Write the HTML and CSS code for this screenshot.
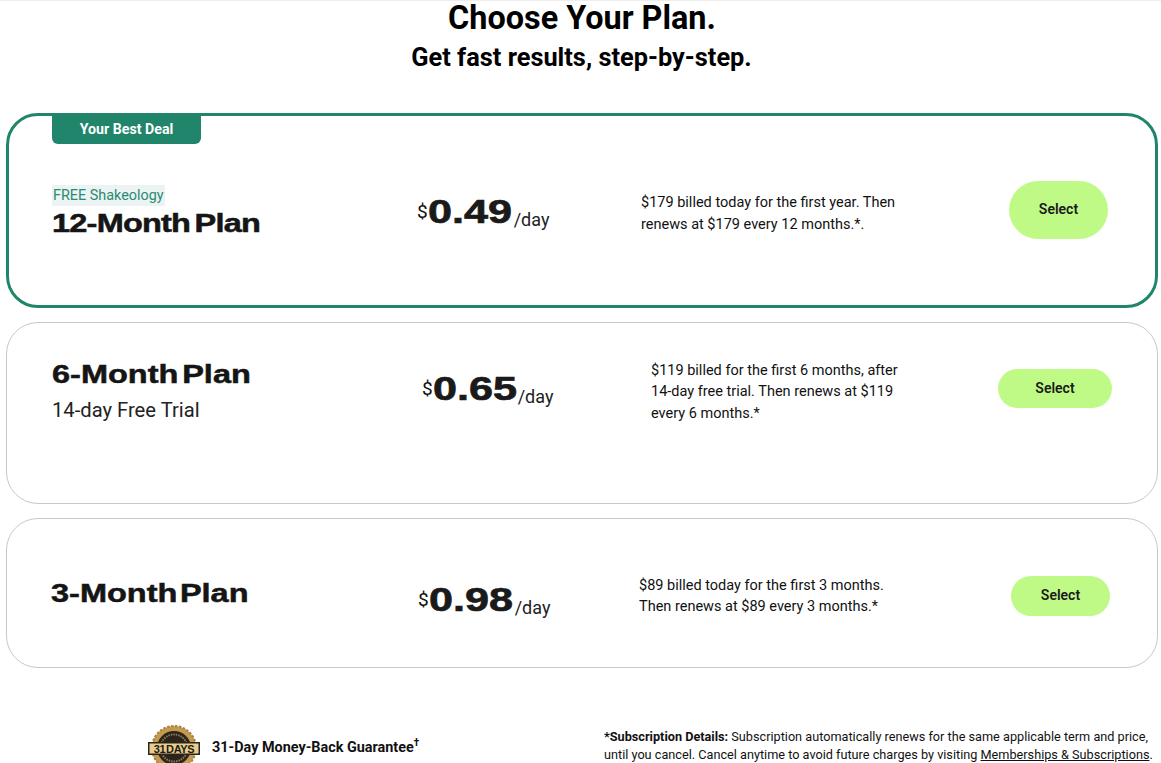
FILE: index.html
```html
<!DOCTYPE html>
<html lang="en">
<head>
    <meta charset="UTF-8">
    <meta name="viewport" content="width=device-width, initial-scale=1.0">
    <title>Choose Your Plan</title>
    <link rel="stylesheet" href="styles.css">
</head>
<body>
<div class="page">
    <h1>Choose Your Plan.</h1>
    <h2>Get fast results, step-by-step.</h2>

    <div class="plan-card plan-12">
        <div class="badge">Your Best Deal</div>
        <div class="plan-name">
            <span class="perk">FREE Shakeology</span>
            <div class="name">12-Month Plan</div>
        </div>
        <div class="price"><sup>$</sup><b>0.49</b><span>/day</span></div>
        <p class="terms">$179 billed today for the first year. Then<br>renews at $179 every 12 months.*.</p>
        <button type="button" class="select-button">Select</button>
    </div>

    <div class="plan-card plan-6">
        <div class="plan-name">
            <div class="name">6-Month Plan</div>
            <div class="trial">14-day Free Trial</div>
        </div>
        <div class="price"><sup>$</sup><b>0.65</b><span>/day</span></div>
        <p class="terms">$119 billed for the first 6 months, after<br>14-day free trial. Then renews at $119<br>every 6 months.*</p>
        <button type="button" class="select-button">Select</button>
    </div>

    <div class="plan-card plan-3">
        <div class="plan-name">
            <div class="name">3-Month Plan</div>
        </div>
        <div class="price"><sup>$</sup><b>0.98</b><span>/day</span></div>
        <p class="terms">$89 billed today for the first 3 months.<br>Then renews at $89 every 3 months.*</p>
        <button type="button" class="select-button">Select</button>
    </div>

    <div class="footer">
        <div class="guarantee">
            <svg class="seal" width="54" height="54" viewBox="0 0 54 54">
                <circle cx="27" cy="24" r="22" fill="#c39a4e" stroke="#a98440" stroke-width="2" stroke-dasharray="2.5 1.5"/>
                <circle cx="27" cy="24" r="17" fill="#2a241b"/>
                <circle cx="27" cy="24" r="13.5" fill="none" stroke="#8d7a58" stroke-width="2" stroke-dasharray="1.5 1"/>
                <rect x="1" y="18" width="52" height="13" fill="#2a241b"/>
                <rect x="2.5" y="19.5" width="49" height="10" fill="#e8cd8e"/>
                <text x="27" y="29" text-anchor="middle" class="seal-text">31 DAYS</text>
            </svg>
            <span class="guarantee-text">31-Day Money-Back Guarantee<sup>†</sup></span>
        </div>
        <p class="details"><b>*Subscription Details:</b> Subscription automatically renews for the same applicable term and price, until you cancel. Cancel anytime to avoid future charges by visiting <a href="#">Memberships &amp; Subscriptions</a>.</p>
    </div>
</div>
</body>
</html>
```

FILE: styles.css
```css
html, body {
    margin: 0;
    height: 763px;
    overflow: hidden;
}
body {
    font-family: Roboto, "Liberation Sans", sans-serif;
    color: #111;
    background: #fff;
}
.page {
    height: 763px;
    overflow: hidden;
    padding-top: 1px;
    border-top: 1px solid #eee;
    box-sizing: border-box;
}
h1 {
    margin: 0;
    padding-left: 3px;
    font-size: 32.4px;
    line-height: 32px;
    font-weight: 700;
    text-align: center;
    color: #000;
}
h2 {
    margin: 7px 0 40px;
    padding-left: 2px;
    font-size: 25.35px;
    line-height: 32px;
    font-weight: 700;
    text-align: center;
    color: #000;
}
.plan-card {
    position: relative;
    display: grid;
    align-items: center;
    box-sizing: border-box;
    width: 1152px;
    margin: 0 0 14px 6px;
    border: 1px solid #c8c8c8;
    border-radius: 32px;
}
.plan-12 {
    grid-template-columns: 365px 224px 368px 99px;
    height: 195px;
    padding-left: 43px;
    border: 3px solid #20856a;
}
.plan-6 {
    grid-template-columns: 370px 229px 347px 114px;
    height: 182px;
    padding-left: 45px;
    padding-bottom: 50px;
}
.plan-3 {
    grid-template-columns: 367px 221px 372px 99px;
    height: 150px;
    padding-left: 44px;
}
.badge {
    position: absolute;
    top: 0;
    left: 43px;
    width: 149px;
    height: 28px;
    border-radius: 0 0 6px 6px;
    background: #20856a;
    color: #fff;
    font-size: 14.2px;
    font-weight: 700;
    line-height: 26px;
    text-align: center;
}
.perk {
    display: inline-block;
    padding: 0 1px;
    background: #ebf4f3;
    color: #2b8a73;
    font-size: 14.4px;
    line-height: 21px;
}
.name {
    font-family: "Liberation Sans", Arial, sans-serif;
    font-size: 25px;
    line-height: 32px;
    font-weight: 700;
    word-spacing: -4px;
    white-space: nowrap;
    color: #151515;
    -webkit-text-stroke: 0.5px #151515;
    transform: scaleX(1.3);
    transform-origin: left center;
}
.plan-12 .name {
    margin-top: 1px;
    letter-spacing: -0.6px;
    word-spacing: -3px;
}
.plan-3 .name {
    word-spacing: -5px;
}
.trial {
    margin-top: 6px;
    font-size: 20.2px;
    line-height: 28px;
    color: #222;
}
.price {
    white-space: nowrap;
}
.price sup {
    font-size: 19px;
    line-height: 0;
    vertical-align: 5px;
}
.price b {
    font-family: "Liberation Sans", Arial, sans-serif;
    font-size: 34px;
    line-height: 40px;
    display: inline-block;
    width: 86px;
    color: #1a1a1a;
    -webkit-text-stroke: 0.7px #1a1a1a;
    transform: scaleX(1.27);
    transform-origin: left center;
}
.plan-6 .price b {
    width: 85px;
}
.price span {
    font-size: 18px;
    line-height: 0;
    vertical-align: -3px;
    color: #222;
}
.terms {
    margin: 6px 0 0;
    font-size: 14.5px;
    line-height: 21.5px;
    color: #111;
}
.select-button {
    padding: 0 0 2px;
    border: none;
    border-radius: 30px;
    background: #bffa87;
    color: #1b1b1b;
    font-family: Roboto, sans-serif;
    font-size: 14px;
    font-weight: 600;
    cursor: pointer;
}
.plan-12 .select-button {
    height: 58px;
    margin-top: -2px;
}
.plan-6 .select-button {
    height: 39px;
    padding: 0;
}
.plan-3 .select-button {
    height: 40px;
    margin-top: 6px;
}
.plan-6 .terms {
    margin-top: 8px;
}
.plan-6 .plan-name {
    margin-top: 6px;
}
.plan-12 .plan-name {
    margin-top: 3px;
}
.plan-3 .price {
    margin-top: 12px;
}
.footer {
    display: flex;
    align-items: flex-start;
    margin-top: 56px;
    padding-left: 147px;
}
.guarantee {
    display: flex;
    align-items: flex-start;
    gap: 11px;
    width: 457px;
    font-size: 14.4px;
    font-weight: 700;
}
.guarantee-text {
    margin-top: 15px;
}
.guarantee sup {
    font-size: 10px;
    line-height: 0;
}
.seal {
    flex: none;
}
.seal-text {
    font-family: "Liberation Sans", Arial, sans-serif;
    font-size: 11px;
    font-weight: 700;
    fill: #1f1a14;
    word-spacing: -2px;
    letter-spacing: -0.3px;
}
.details {
    margin: 4px 0 0;
    width: 552px;
    font-size: 12.7px;
    line-height: 18px;
}
.details a {
    color: inherit;
}
```
